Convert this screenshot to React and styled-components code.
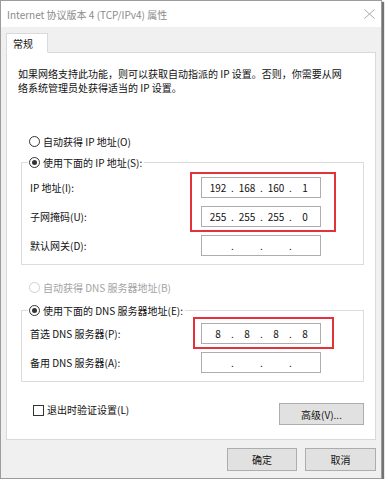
import React from 'react'
import styled, { createGlobalStyle } from 'styled-components'

const GlobalStyle = createGlobalStyle`
  html, body {
    margin: 0;
    padding: 0;
    background: #fff;
  }
  body {
    font-family: "Noto Sans CJK SC", "Microsoft YaHei", sans-serif;
    font-size: 10px;
    color: #111;
  }
`

const Dialog = styled.div`
  width: 382px;
  height: 479px;
  box-sizing: border-box;
  border: 1px solid #9c9c9c;
  background: #f0f0f0;
  box-shadow: 2px 2px 1px rgba(0, 0, 0, 0.55);
  display: flex;
  flex-direction: column;
  overflow: hidden;
`

const TitleBar = styled.div`
  height: 26px;
  flex-shrink: 0;
  background: #fff;
  display: flex;
  align-items: center;
  justify-content: space-between;
  padding: 0 6px 0 6px;
`

const Title = styled.span`
  color: #8a8a8a;
  line-height: 13px;
`

const Body = styled.div`
  padding: 6px 5px 0;
  display: flex;
  flex-direction: column;
`

const TabStrip = styled.div`
  display: flex;
`

const Tab = styled.div`
  position: relative;
  height: 20px;
  width: 42px;
  box-sizing: border-box;
  padding-left: 6px;
  display: flex;
  align-items: center;
  background: #fff;
  border: 1px solid #d9d9d9;
  border-bottom-color: #fff;
  margin-bottom: -1px;
`

const Panel = styled.div`
  background: #fff;
  border: 1px solid #d9d9d9;
  padding: 14px 11px 14px;
  display: flex;
  flex-direction: column;
`

const Description = styled.p`
  margin: 0;
  line-height: 14px;
`

const Option = styled.label`
  display: flex;
  align-items: center;
  gap: 3px;
  line-height: 13px;
  margin: ${(p) => p.$top || 0}px 0 0 ${(p) => p.$indent ?? 11}px;
  color: ${(p) => (p.$disabled ? '#a3a3a3' : '#111')};
`

const Radio = styled.span`
  width: 11px;
  height: 11px;
  box-sizing: border-box;
  border-radius: 50%;
  border: 1px solid ${(p) => (p.$disabled ? '#cfcfcf' : '#333')};
  background: #fff;
  display: flex;
  align-items: center;
  justify-content: center;
  &::after {
    content: '';
    width: 5px;
    height: 5px;
    border-radius: 50%;
    background: ${(p) => (p.$checked ? '#333' : 'transparent')};
  }
`

const Check = styled.span`
  width: 11px;
  height: 11px;
  box-sizing: border-box;
  border: 1px solid #333;
  background: #fff;
  margin-top: 1px;
`

const Group = styled.fieldset`
  margin: ${(p) => p.$top}px 0 0 3px;
  padding: ${(p) => p.$padTop}px 0 8px 6px;
  border: 1px solid #dcdcdc;
  min-width: 0;
`

const Legend = styled.legend`
  padding: 0 2px 0 1px;
  display: flex;
  align-items: center;
  gap: 3px;
  line-height: 13px;
`

const FieldGrid = styled.div`
  display: grid;
  grid-template-columns: 171px 120px;
  grid-auto-rows: 21px;
  row-gap: 8px;
  padding-left: 2px;
  align-items: center;
`

const FieldLabel = styled.span`
  grid-column: 1;
  grid-row: ${(p) => p.$row};
  line-height: 13px;
`

const IpBox = styled.div`
  grid-column: 2;
  grid-row: ${(p) => p.$row};
  height: 21px;
  box-sizing: border-box;
  border: 1px solid #adadad;
  background: #fff;
  display: flex;
  align-items: center;
  padding-left: 4px;
  line-height: 19px;
`

const Octet = styled.span`
  width: 24px;
  text-align: center;
`

const Dot = styled.span`
  width: 5px;
  text-align: center;
`

const Highlight = styled.div`
  grid-column: 2;
  grid-row: 1 / span ${(p) => p.$rows};
  align-self: stretch;
  justify-self: stretch;
  margin: ${(p) => p.$m};
  border: 2px solid #e2323c;
  pointer-events: none;
`

const BottomRow = styled.div`
  margin-top: 21px;
  display: flex;
  justify-content: space-between;
  align-items: flex-start;
`

const Button = styled.button`
  width: ${(p) => p.$w}px;
  height: ${(p) => p.$h}px;
  background: #e1e1e1;
  border: 1px solid #adadad;
  border-radius: 0;
  font: inherit;
  color: #111;
  padding: 0;
`

const Footer = styled.div`
  display: flex;
  justify-content: flex-end;
  gap: 8px;
  padding-top: 8px;
`

const CloseIcon = () => (
  <svg width='11' height='10' viewBox='0 0 11 10'>
    <path d='M0.5 0.5 L10.5 9.5 M10.5 0.5 L0.5 9.5' stroke='#a8a8a8' strokeWidth='1' fill='none' />
  </svg>
)

const IpField = ({ value, row }) => {
  const parts = value ? value.split('.') : ['', '', '', '']
  return (
    <IpBox $row={row}>
      {parts.map((part, i) => (
        <React.Fragment key={i}>
          <Octet>{part}</Octet>
          {i < 3 && <Dot>.</Dot>}
        </React.Fragment>
      ))}
    </IpBox>
  )
}

const ipRows = [
  { label: 'IP 地址(I):', value: '192.168.160.1' },
  { label: '子网掩码(U):', value: '255.255.255.0' },
  { label: '默认网关(D):', value: '' },
]

const dnsRows = [
  { label: '首选 DNS 服务器(P):', value: '8.8.8.8' },
  { label: '备用 DNS 服务器(A):', value: '' },
]

const Fields = ({ rows, highlight }) => (
  <FieldGrid>
    {rows.map((row, i) => (
      <React.Fragment key={row.label}>
        <FieldLabel $row={i + 1}>{row.label}</FieldLabel>
        <IpField value={row.value} row={i + 1} />
      </React.Fragment>
    ))}
    <Highlight $rows={highlight.rows} $m={highlight.m} />
  </FieldGrid>
)

const App = () => {
  return (
    <>
      <GlobalStyle />
      <Dialog>
        <TitleBar>
          <Title>Internet 协议版本 4 (TCP/IPv4) 属性</Title>
          <CloseIcon />
        </TitleBar>
        <Body>
          <TabStrip>
            <Tab>常规</Tab>
          </TabStrip>
          <Panel>
            <Description>
              如果网络支持此功能，则可以获取自动指派的 IP 设置。否则，你需要从网
              <br />
              络系统管理员处获得适当的 IP 设置。
            </Description>

            <Option $top={40}>
              <Radio />
              自动获得 IP 地址(O)
            </Option>
            <Group $top={8} $padTop={8}>
              <Legend>
                <Radio $checked />
                使用下面的 IP 地址(S):
              </Legend>
              <Fields rows={ipRows} highlight={{ rows: 2, m: '-5px -15px -5px -11px' }} />
            </Group>

            <Option $top={16} $disabled>
              <Radio $disabled />
              自动获得 DNS 服务器地址(B)
            </Option>
            <Group $top={10} $padTop={6}>
              <Legend>
                <Radio $checked />
                使用下面的 DNS 服务器地址(E):
              </Legend>
              <Fields rows={dnsRows} highlight={{ rows: 1, m: '-6px -13px -5px -8px' }} />
            </Group>

            <BottomRow>
              <Option $indent={15}>
                <Check />
                退出时验证设置(L)
              </Option>
              <Button $w={85} $h={22}>高级(V)...</Button>
            </BottomRow>
          </Panel>
          <Footer>
            <Button $w={70} $h={23}>确定</Button>
            <Button $w={71} $h={23}>取消</Button>
          </Footer>
        </Body>
      </Dialog>
    </>
  )
}

export default App
